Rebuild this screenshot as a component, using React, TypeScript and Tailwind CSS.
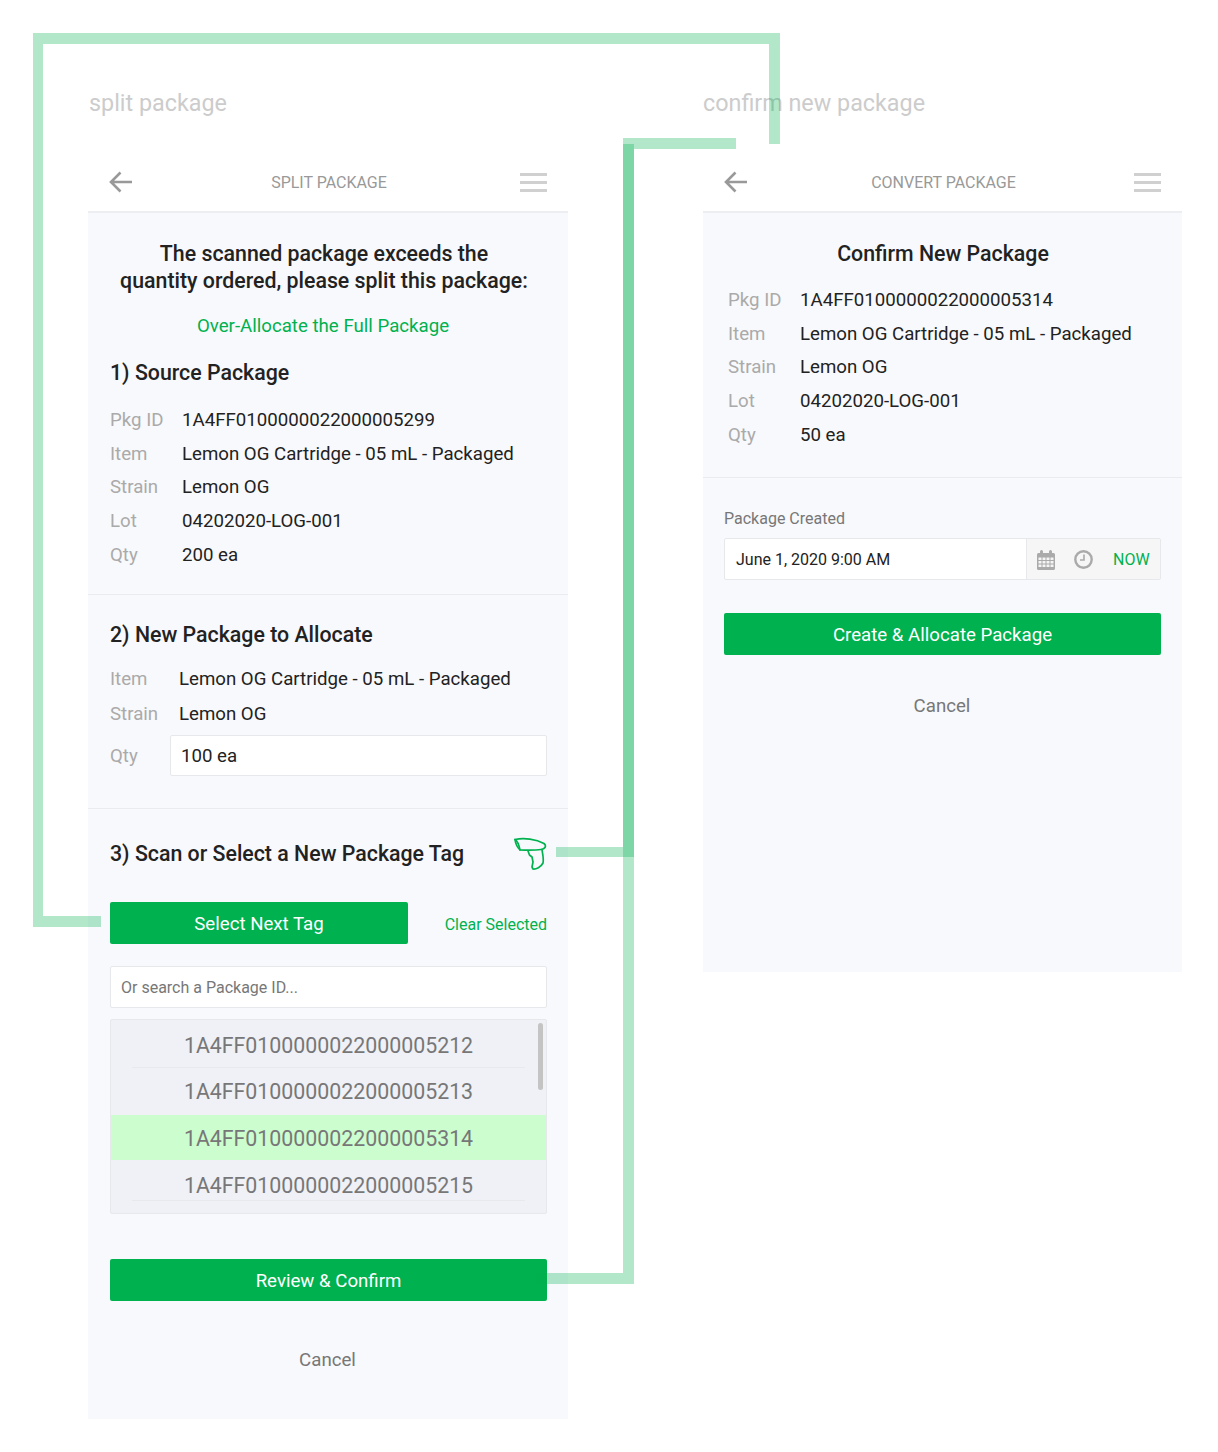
const GREEN_BTN = "flex h-[42px] items-center justify-center rounded-[2px] bg-[#00b14f] pt-[2px] text-[18.67px] text-white";

function BackArrow() {
  return (
    <svg width="24" height="22" viewBox="0 0 24 22" fill="none" stroke="#999" strokeWidth="2.6">
      <path d="M23 11H2M11.5 1.500 2 11l9.500 9.500" />
    </svg>
  );
}

function Header({ title }: { title: string }) {
  return (
    <div className="flex h-[70px] items-center justify-between border-b-2 border-[#eceef1] bg-white px-[21px] pt-[10px]">
      <BackArrow />
      <span className="ml-[5px] pt-[2px] text-[16px] text-[#999]">{title}</span>
      <div className="flex w-[27px] flex-col gap-[5px]">
        <div className="h-[3px] bg-[#d0d0d0]" />
        <div className="h-[3px] bg-[#d0d0d0]" />
        <div className="h-[3px] bg-[#d0d0d0]" />
      </div>
    </div>
  );
}

function Row({ label, value, w, h = "h-[33.7px]" }: { label: string; value: string; w: string; h?: string }) {
  return (
    <div className={`flex items-center ${h}`}>
      <span className={`${w} shrink-0 text-[#aaa]`}>{label}</span>
      <span className="text-[#222]">{value}</span>
    </div>
  );
}

function Scanner() {
  return (
    <svg width="33" height="34" viewBox="0 0 33 34" fill="none" stroke="#00b14f" strokeWidth="1.700" strokeLinejoin="round" strokeLinecap="round">
      <path d="M1 2.500C10 .5 22 2 30 6.500c2.800 2.500 1.200 5.500-3 6-7 1-15 .5-21 .5C3 10 1.500 6.500 1 2.500Z" />
      <path d="M1 2.500c2.500 1.500 4.200 6.500 5 10.500" />
      <path d="M14 14l1.500 4 2.500 2 1 5-1 5 1 2c3 .5 8-2 10-6 1-4-.500-9-1-13.500" />
    </svg>
  );
}

function TagRow({ id, cls, inner }: { id: string; cls: string; inner: string }) {
  return (
    <div className={`flex justify-center ${cls}`}>
      <div className={`flex w-[393px] justify-center ${inner}`}>
        <span className="text-[21.33px] leading-[28px] text-[#777]">{id}</span>
      </div>
    </div>
  );
}

function CalendarIcon() {
  return (
    <svg width="18" height="20" viewBox="0 0 18 20" fill="#aaa">
      <path d="M1.500 3H3V1.500a1.500 1.500 0 0 1 3 0V3h6V1.500a1.500 1.500 0 0 1 3 0V3h1.500A1.500 1.500 0 0 1 18 4.500v14a1.500 1.500 0 0 1-1.500 1.500h-15A1.500 1.500 0 0 1 0 18.500v-14A1.500 1.500 0 0 1 1.500 3Z" />
      <path
        d="M1.500 7.500h3v2.500h-3zM5.500 7.500h3v2.500h-3zM9.500 7.500h3v2.500h-3zM13.500 7.500h3v2.500h-3zM1.500 11h3v2.500h-3zM5.500 11h3v2.500h-3zM9.500 11h3v2.500h-3zM13.500 11h3v2.500h-3zM1.500 14.500h3V17h-3zM5.500 14.500h3V17h-3zM9.500 14.500h3V17h-3zM13.500 14.500h3V17h-3z"
        fill="#f4f4f4"
      />
    </svg>
  );
}

function ClockIcon() {
  return (
    <svg width="19" height="19" viewBox="0 0 19 19" fill="none" stroke="#aaa">
      <circle cx="9.500" cy="9.500" r="8.200" strokeWidth="2.400" />
      <path d="M10 4.500v5.500H6" strokeWidth="1.600" />
    </svg>
  );
}

export default function App() {
  return (
    <div
      className="relative flex h-[1452px] w-[1218px] items-start gap-[135px] overflow-hidden bg-white pl-[88px] text-[18.67px]"
      style={{ fontFamily: "Roboto, sans-serif" }}
    >
      {/* left column */}
      <div className="w-[480px]">
        <div className="flex h-[143px] items-start pt-[87px] pl-[1px] text-[23.33px] leading-[33px] text-[#ccc]">split package</div>

        <Header title="SPLIT PACKAGE" />

        <div className="bg-[#f8f9fc]">
          <div className="border-b border-[#e9ebee] pt-[27px] pr-[21px] pb-[22.500px] pl-[22px]">
            <div className="pr-[9px] text-center text-[21.33px] leading-[27px] font-medium text-[#222]">
              The scanned package exceeds the
              <br />
              quantity ordered, please split this package:
            </div>
            <div className="mt-[19px] pr-[11px] text-center leading-[27px] text-[#00b14f]">Over-Allocate the Full Package</div>
            <div className="mt-[16px] mb-[14px] text-[21.33px] leading-[33px] font-medium text-[#222]">1) Source Package</div>
            <Row w="w-[72px]" label="Pkg ID" value="1A4FF0100000022000005299" />
            <Row w="w-[72px]" label="Item" value="Lemon OG Cartridge - 05 mL - Packaged" />
            <Row w="w-[72px]" label="Strain" value="Lemon OG" />
            <Row w="w-[72px]" label="Lot" value="04202020-LOG-001" />
            <Row w="w-[72px]" label="Qty" value="200 ea" />
          </div>

          <div className="border-b border-[#e9ebee] pt-[23px] pr-[21px] pb-[32px] pl-[22px]">
            <div className="mb-[11px] text-[21.33px] leading-[33px] font-medium text-[#222]">2) New Package to Allocate</div>
            <Row w="w-[69px]" h="h-[34.500px]" label="Item" value="Lemon OG Cartridge - 05 mL - Packaged" />
            <Row w="w-[69px]" h="h-[34.500px]" label="Strain" value="Lemon OG" />
            <div className="mt-[4px] flex items-center">
              <span className="w-[60px] pt-[2px] text-[#aaa]">Qty</span>
              <div className="flex h-[41px] flex-1 items-center rounded-[2px] border border-[#e6e8ec] bg-white px-[10px] pt-[2px] text-[#222]">100 ea</div>
            </div>
          </div>

          <div className="pt-[28px] pr-[21px] pb-[45px] pl-[22px]">
            <div className="flex h-[34px] items-center justify-between">
              <span className="text-[21.33px] font-medium text-[#222]">3) Scan or Select a New Package Tag</span>
              <Scanner />
            </div>
            <div className="mt-[31px] flex items-center justify-between">
              <div className={`${GREEN_BTN} w-[298px]`}>Select Next Tag</div>
              <span className="pt-[4px] text-[16px] text-[#00b14f]">Clear Selected</span>
            </div>
            <div className="mt-[22px] flex h-[42px] items-center rounded-[2px] border border-[#e6e8ec] bg-white px-[10px] pt-[2px] text-[16px] text-[#777]">
              Or search a Package ID...
            </div>
            <div className="relative mt-[11px] h-[195px] rounded-[2px] border border-[#e6e8ec] bg-[#eff1f6]">
              <TagRow id="1A4FF0100000022000005212" cls="h-[48px]" inner="items-center border-b border-[#e7e9ed] pt-[6px]" />
              <TagRow id="1A4FF0100000022000005213" cls="h-[47px]" inner="items-center pt-[2px]" />
              <TagRow id="1A4FF0100000022000005314" cls="h-[45px] bg-[#ccfdcf]" inner="items-center pt-[4px]" />
              <TagRow id="1A4FF0100000022000005215" cls="h-[41px]" inner="items-end border-b border-[#e7e9ed]" />
              <div className="absolute top-[3px] right-[3px] h-[67px] w-[5px] rounded-full bg-[#c4c4c4]" />
            </div>
            <div className={`${GREEN_BTN} mt-[45px]`}>Review &amp; Confirm</div>
            <div className="mt-[46px] pr-[2px] text-center leading-[27px] text-[#777]">Cancel</div>
          </div>
        </div>
      </div>

      {/* right column */}
      <div className="w-[479px]">
        <div className="flex h-[143px] items-start pt-[87px] text-[23.33px] leading-[33px] text-[#ccc]">confirm new package</div>

        <Header title="CONVERT PACKAGE" />

        <div className="h-[759px] bg-[#f8f9fc]">
          <div className="border-b border-[#e9ebee] pt-[27px] pr-[21px] pb-[25.500px] pl-[25px]">
            <div className="pr-[3px] text-center text-[21.33px] leading-[27px] font-medium text-[#222]">Confirm New Package</div>
            <div className="mt-[16px]">
              <Row w="w-[72px]" label="Pkg ID" value="1A4FF0100000022000005314" />
              <Row w="w-[72px]" label="Item" value="Lemon OG Cartridge - 05 mL - Packaged" />
              <Row w="w-[72px]" label="Strain" value="Lemon OG" />
              <Row w="w-[72px]" label="Lot" value="04202020-LOG-001" />
              <Row w="w-[72px]" label="Qty" value="50 ea" />
            </div>
          </div>
          <div className="pt-[31px] pr-[21px] pl-[21px]">
            <div className="text-[16px] leading-[20px] text-[#777]">Package Created</div>
            <div className="mt-[9px] flex h-[42px] items-stretch rounded-[2px] border border-[#e6e8ec] bg-white text-[16px] text-[#222]">
              <div className="flex flex-1 items-center px-[11px] pt-[2px]">June 1, 2020 9:00 AM</div>
              <div className="flex w-[134px] items-center border-l border-[#e6e8ec] bg-[#f6f6f6] pt-[2px] pl-[10px]">
                <CalendarIcon />
                <div className="ml-[19px]">
                  <ClockIcon />
                </div>
                <span className="ml-[20px] text-[#00b14f]">NOW</span>
              </div>
            </div>
            <div className={`${GREEN_BTN} mt-[33px]`}>Create &amp; Allocate Package</div>
            <div className="mt-[38px] pr-[1px] text-center leading-[27px] text-[#777]">Cancel</div>
          </div>
        </div>
      </div>

      {/* connector lines over the screens */}
      <div className="absolute top-[33px] left-[33px] h-[11px] w-[747px] bg-[#00b14f]/30" />
      <div className="absolute top-[44px] left-[33px] h-[872px] w-[10px] bg-[#00b14f]/30" />
      <div className="absolute top-[916px] left-[33px] h-[11px] w-[68px] bg-[#00b14f]/30" />
      <div className="absolute top-[44px] left-[769px] h-[100px] w-[11px] bg-[#00b14f]/30" />
      <div className="absolute top-[138px] left-[623px] h-[11px] w-[113px] bg-[#00b14f]/30" />
      <div className="absolute top-[144px] left-[623px] h-[713px] w-[11px] bg-[#00b14f]/30" />
      <div className="absolute top-[149px] left-[623px] h-[1135px] w-[11px] bg-[#00b14f]/30" />
      <div className="absolute top-[847px] left-[556px] h-[10px] w-[67px] bg-[#00b14f]/30" />
      <div className="absolute top-[1273px] left-[536px] h-[11px] w-[87px] bg-[#00b14f]/30" />
    </div>
  );
}
